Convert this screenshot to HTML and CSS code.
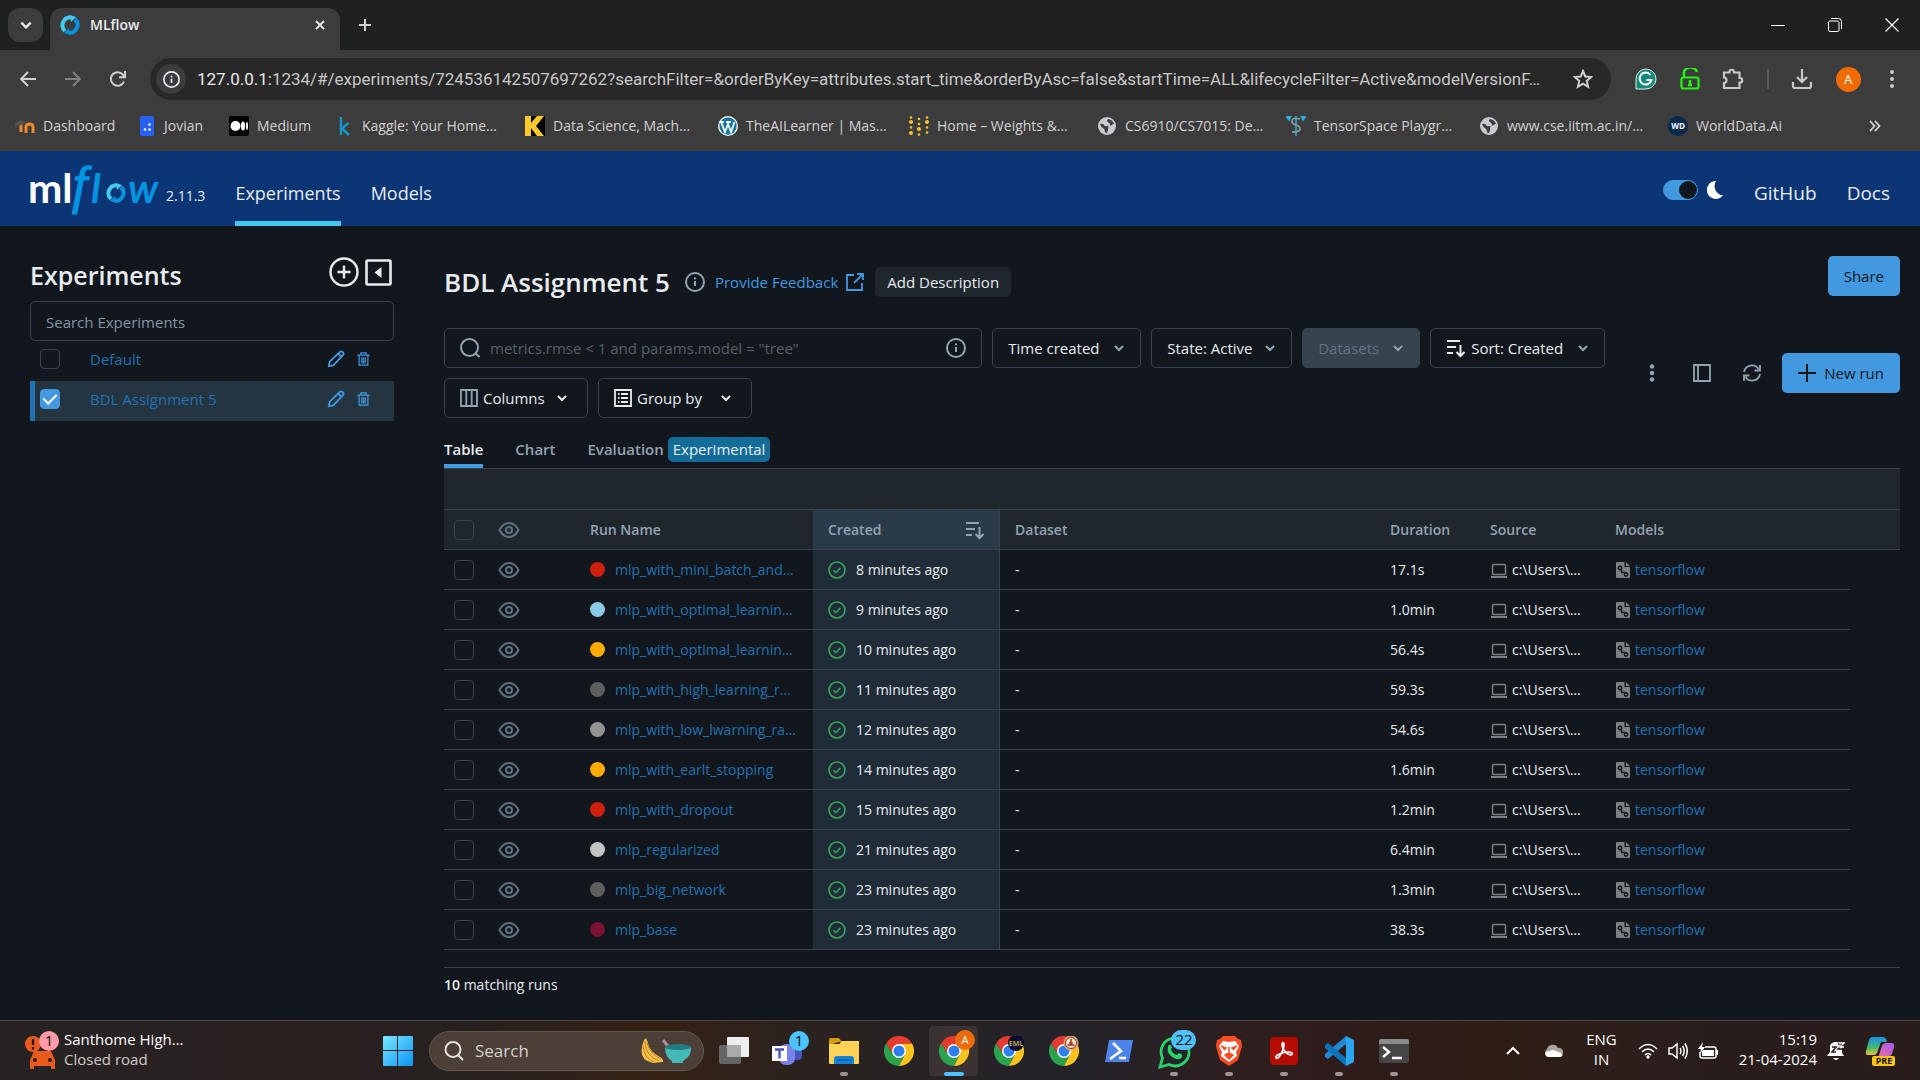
FILE: index.html
```html
<!DOCTYPE html>
<html lang="en">
<head>
<meta charset="utf-8">
<title>MLflow</title>
<link rel="stylesheet" href="styles.css">
</head>
<body>
<svg class="sprite" aria-hidden="true">
  <symbol id="chevron" viewBox="0 0 12 12"><path d="M2 4l4 4 4-4" fill="none" stroke="currentColor" stroke-width="2"/></symbol>
  <symbol id="info" viewBox="0 0 20 20"><g fill="none" stroke="currentColor" stroke-width="2"><circle cx="10" cy="10" r="9"/><path d="M10 9v5"/></g><circle cx="10" cy="6.400" r="1.100" fill="currentColor"/></symbol>
  <symbol id="sort" viewBox="0 0 20 20"><path d="M1 3h13M1 9h9M1 15h6M14.500 7v11M10.500 14l4 4 4-4" fill="none" stroke="currentColor" stroke-width="2"/></symbol>
  <symbol id="eye" viewBox="0 0 22 18"><g fill="none" stroke="currentColor" stroke-width="2"><path d="M1.500 9C4 4 7.500 2 11 2s7 2 9.500 7c-2.500 5-6 7-9.500 7S4 14 1.500 9z"/><circle cx="11" cy="9" r="3"/></g></symbol>
  <symbol id="ok" viewBox="0 0 18 18"><g fill="none" stroke="currentColor" stroke-width="1.600"><circle cx="9" cy="9" r="8"/><path d="M5.500 9.200l2.500 2.500 4.500-5"/></g></symbol>
  <symbol id="laptop" viewBox="0 0 18 16"><rect x="2.500" y="2.500" width="13" height="10" rx="1" fill="none" stroke="currentColor" stroke-width="1.500"/><path d="M1 15h16" stroke="currentColor" stroke-width="2"/></symbol>
  <symbol id="model" viewBox="0 0 16 18"><path d="M2 1h7.500v5H15v10q0 1-1 1H2q-1 0-1-1V2q0-1 1-1zM11 1l4 4h-4z" fill="currentColor"/><g fill="none" stroke="#11171c" stroke-width="1.500"><circle cx="5" cy="7" r="1.700"/><circle cx="11" cy="13.500" r="1.700"/><path d="M6 8.500l1 3h3"/></g></symbol>
  <symbol id="pencil" viewBox="0 0 20 20"><g fill="none" stroke="currentColor" stroke-width="2"><path d="M2 18l1-5L14.500 2q1.500-1 3 .5t.5 3L7 17z"/><path d="M12.500 4l3.500 3.500"/></g></symbol>
  <symbol id="trash" viewBox="0 0 14 16"><path d="M0 3.500h14M4 3V1h6v2M2 4v11h10V4M5 6v7M7 6v7M9 6v7" fill="none" stroke="currentColor" stroke-width="1.400"/></symbol>
  <symbol id="globe" viewBox="0 0 20 20"><circle cx="10" cy="10" r="9" fill="#c7cacf"/><path d="M3 8q3-1 4 1t3 1 1 4-3 2q0-3-2-4t-3-4zM11 3q-2 2 0 3t2 3 3-1l1 0q-1-4-6-5z" fill="#3c3c3c"/></symbol>
  <symbol id="chrome" viewBox="0 0 24 24"><path d="M1.600 6A12 12 0 0 1 22.400 6L12 6.500 7.200 14.800z" fill="#e33b2e"/><path d="M1.600 6A12 12 0 0 0 12 24l4.800-9.200H7.200z" fill="#2ba24c"/><path d="M22.400 6A12 12 0 0 1 12 24l4.800-9.200L12 6.500z" fill="#fcc31e"/><circle cx="12" cy="12" r="5.600" fill="#fff"/><circle cx="12" cy="12" r="4.400" fill="#2d7ff0"/></symbol>
  <symbol id="loop" viewBox="0 0 20 20"><g fill="none" stroke-width="4"><path d="M5 16A8 8 0 0 1 11 2.200" stroke="#43c9ed"/><path d="M15 4A8 8 0 0 1 9 17.800" stroke="#0194e2"/></g><path d="M10 0l6 2-5 5z" fill="#43c9ed"/><path d="M10 20l-6-2 5-5z" fill="#0194e2"/></symbol>
</svg>

<div class="tabstrip">
  <button class="tab-search" aria-label="Search tabs"><svg width="14" height="14"><use href="#chevron"/></svg></button>
  <div class="tab">
    <svg width="20" height="20"><use href="#loop"/></svg>
    <span class="tab-title">MLflow</span>
    <button class="plain" aria-label="Close tab"><svg width="10" height="10" viewBox="0 0 10 10"><path d="M1 1l8 8M9 1L1 9" stroke="#e3e3e3" stroke-width="2"/></svg></button>
  </div>
  <button class="plain new-tab" aria-label="New tab"><svg width="14" height="14" viewBox="0 0 14 14"><path d="M7 1v12M1 7h12" stroke="#d5d5d5" stroke-width="2"/></svg></button>
  <div class="window-buttons">
    <button class="plain" aria-label="Minimize"><svg width="14" height="14" viewBox="0 0 14 14"><path d="M0 7.500h14" stroke="#fff"/></svg></button>
    <button class="plain" aria-label="Restore"><svg width="14" height="14" viewBox="0 0 14 14" fill="none" stroke="#fff"><rect x=".5" y="3" width="10.500" height="10.500" rx="1.500"/><path d="M3 .5h7.500q3 0 3 3V11"/></svg></button>
    <button class="plain" aria-label="Close"><svg width="14" height="14" viewBox="0 0 14 14"><path d="M.5 .5l13 13M13.500.5l-13 13" stroke="#fff" stroke-width="1.200"/></svg></button>
  </div>
</div>

<div class="toolbar">
  <button class="plain" aria-label="Back"><svg width="16" height="16" viewBox="0 0 16 16"><path d="M16 8H1.500M8 1L1.200 8 8 15" fill="none" stroke="#d0d0d0" stroke-width="2"/></svg></button>
  <button class="plain" aria-label="Forward"><svg width="16" height="16" viewBox="0 0 16 16"><path d="M0 8h14.500M8 1l6.800 7L8 15" fill="none" stroke="#808080" stroke-width="2"/></svg></button>
  <button class="plain" aria-label="Reload"><svg width="16" height="16" viewBox="0 0 16 16"><path d="M14 10.500A6.800 6.800 0 1 1 13.200 4L15 6M15 0v6.200H9" fill="none" stroke="#d0d0d0" stroke-width="2"/></svg></button>
  <div class="address">
    <span class="site-info"><svg width="17" height="17"><use href="#info"/></svg></span>
    <div class="url"><span class="host">127.0.0.1:</span>1234/#/experiments/724536142507697262?searchFilter=&amp;orderByKey=attributes.start_time&amp;orderByAsc=false&amp;startTime=ALL&amp;lifecycleFilter=Active&amp;modelVersionF…</div>
    <svg width="20" height="20" viewBox="0 0 20 20"><path d="M10 2l2.300 5.500 6 .5-4.600 3.900 1.400 5.900-5.100-3.200-5.100 3.200 1.400-5.900L1.700 8l6-.5z" fill="none" stroke="#cfcfcf" stroke-width="2"/></svg>
  </div>
  <div class="extensions">
    <svg width="22" height="22" viewBox="0 0 22 22"><path d="M1 21V11A10 10 0 1 1 11 21z" fill="#118a78" stroke="#d9f0ec"/><path d="M15.500 7A6 6 0 1 0 16.500 12H11.500" fill="none" stroke="#fff" stroke-width="2"/></svg>
    <svg width="20" height="22" viewBox="0 0 20 22"><rect x="1.500" y="9.500" width="17" height="11" rx="2" fill="none" stroke="#22f312" stroke-width="2.200"/><path d="M4 9V6a6 5 0 0 1 13-2M10 12v6M8 17h4" fill="none" stroke="#22f312" stroke-width="2.500"/></svg>
    <svg width="22" height="22" viewBox="0 0 22 22"><path d="M2 4.500h5.500V4a2.200 2.200 0 0 1 4.500 0v.5h5.500V10H18a2.200 2.200 0 0 1 0 4.500h-.500V20H2v-5q2.500 0 2.500-2.700T2 9.500z" fill="none" stroke="#c8c8c8" stroke-width="2.200"/></svg>
    <span class="bar"></span>
    <svg width="22" height="22" viewBox="0 0 22 22"><path d="M11 1v12M6 9l5 5 5-5M2 14v4q0 2 2 2h14q2 0 2-2v-4" fill="none" stroke="#c8c8c8" stroke-width="2.200"/></svg>
    <span class="avatar">A</span>
    <svg class="menu" width="6" height="20" viewBox="0 0 6 20" fill="#c8c8c8"><circle cx="3" cy="3" r="2"/><circle cx="3" cy="10" r="2"/><circle cx="3" cy="17" r="2"/></svg>
  </div>
</div>

<nav class="bookmarks" aria-label="Bookmarks">
  <a href="#"><svg width="20" height="20" viewBox="0 0 20 20"><path d="M6 16V8M11 17v-6q0-3 3.500-3t3.500 3v6" stroke="#f08a2c" stroke-width="3" fill="none"/><path d="M0 8l5-3 5 1-4 3zM1 8v5" fill="#555" stroke="#555"/></svg>Dashboard</a>
  <a href="#"><svg width="18" height="20" viewBox="0 0 18 20"><rect x="2" width="14" height="20" rx="2" fill="#285ff5"/><g fill="#fff"><circle cx="7" cy="13.500" r="1.300"/><circle cx="11.500" cy="13.500" r="1.300"/><circle cx="11.500" cy="8.500" r="1.300"/></g></svg>Jovian</a>
  <a href="#"><svg width="20" height="20" viewBox="0 0 20 20"><rect width="20" height="20" rx="2"/><g fill="#fff"><circle cx="6.500" cy="10" r="5"/><ellipse cx="14" cy="10" rx="2" ry="4.500"/><ellipse cx="18" cy="10" rx="1" ry="4"/></g></svg>Medium</a>
  <a href="#"><svg width="17" height="20" viewBox="0 0 17 20"><path d="M4 1v18M11.500 7L5 12.500l7 6.500" stroke="#1597c8" stroke-width="2.400" fill="none"/></svg>Kaggle: Your Home…</a>
  <a href="#"><svg width="20" height="20" viewBox="0 0 20 20"><rect width="20" height="20"/><path d="M0 0h6v7l6-7h7l-8 10 8 10h-7l-6-8v8H0z" fill="#fdc92d"/></svg>Data Science, Mach…</a>
  <a href="#"><svg width="20" height="20" viewBox="0 0 20 20"><circle cx="10" cy="10" r="10" fill="#fff"/><circle cx="10" cy="10" r="8.700" fill="#1576a5"/><path d="M3 6l4 10 3-8 3 8 3.500-10M2 6h4M8 6h5" fill="none" stroke="#fff" stroke-width="1.800"/></svg>TheAILearner | Mas…</a>
  <a href="#"><svg width="20" height="20" viewBox="0 0 20 20" fill="#fcc42b"><circle cx="2" cy="1.500" r="1.300"/><circle cx="2" cy="6" r="2"/><circle cx="2" cy="11.500" r="1.300"/><circle cx="2" cy="17" r="2"/><circle cx="10" cy="3" r="1.300"/><circle cx="10" cy="8" r="1.300"/><circle cx="10" cy="13" r="2"/><circle cx="10" cy="18.500" r="1.300"/><circle cx="18" cy="1.500" r="1.300"/><circle cx="18" cy="6" r="2"/><circle cx="18" cy="11.500" r="1.300"/><circle cx="18" cy="16.500" r="1.300"/></svg>Home – Weights &amp;…</a>
  <a href="#"><svg width="20" height="20"><use href="#globe"/></svg>CS6910/CS7015: De…</a>
  <a href="#"><svg width="20" height="20" viewBox="0 0 20 20"><path d="M0 0h5L3 4zM20 0h-5l2 4zM10 0v20" fill="#26b3e6" stroke="#26b3e6" stroke-width="1.500"/><path d="M14 3q-8-2-8 2 0 3 4 4t4 4-8 3" fill="none" stroke="#8e979b" stroke-width="1.800"/></svg>TensorSpace Playgr…</a>
  <a href="#"><svg width="20" height="20"><use href="#globe"/></svg>www.cse.iitm.ac.in/…</a>
  <a href="#"><svg width="20" height="20" viewBox="0 0 20 20"><circle cx="10" cy="10" r="10" fill="#082a4c"/><text x="10" y="13" text-anchor="middle" class="wd">WD</text></svg>WorldData.Ai</a>
  <button class="plain more" aria-label="More bookmarks"><svg width="12" height="12" viewBox="0 0 12 12"><path d="M1 1l4.500 5L1 11M6 1l4.500 5L6 11" fill="none" stroke="#d5d5d5" stroke-width="1.800"/></svg></button>
</nav>

<header class="app-header">
  <svg class="logo" width="134" height="54" viewBox="0 0 134 54" role="img" aria-label="mlflow">
    <text x="-2" y="41" class="logo-ml">ml</text>
    <text x="35" y="41" class="logo-f">ƒ</text>
    <text x="61" y="41" class="logo-l">l</text>
    <svg x="76" y="21" width="20" height="20"><use href="#loop"/></svg>
    <text x="98" y="41" class="logo-w">w</text>
  </svg>
  <span class="version">2.11.3</span>
  <nav class="app-nav">
    <a href="#" class="current">Experiments</a>
    <a href="#">Models</a>
  </nav>
  <div class="header-right">
    <input type="checkbox" class="switch" aria-label="Dark theme" checked>
    <svg width="17" height="20" viewBox="0 0 17 20"><path d="M9 1A9 9 0 1 0 16 15.500 9.500 9.500 0 0 1 9 1z" fill="#fff"/></svg>
    <a href="#">GitHub</a>
    <a href="#">Docs</a>
  </div>
</header>

<div class="page">
  <aside class="sidebar">
    <div class="side-head">
      <h2>Experiments</h2>
      <button class="plain" aria-label="Create experiment"><svg width="30" height="30" viewBox="0 0 30 30"><g fill="none" stroke="#e8ecf0" stroke-width="2.400"><circle cx="15" cy="15" r="13.500"/><path d="M15 8.500v13M8.500 15h13"/></g></svg></button>
      <button class="plain" aria-label="Hide experiments"><svg width="27" height="27" viewBox="0 0 27 27"><rect x="1.500" y="1.500" width="24" height="24" rx="1" fill="none" stroke="#e8ecf0" stroke-width="2.600"/><path d="M16.500 8v11L9.500 13.500z" fill="#e8ecf0"/></svg></button>
    </div>
    <input class="side-search" type="text" placeholder="Search Experiments" aria-label="Search Experiments">
    <div class="experiment">
      <input type="checkbox" class="box" aria-label="Select Default">
      <a href="#">Default</a>
      <button class="plain" aria-label="Rename Default"><svg width="18" height="18"><use href="#pencil"/></svg></button>
      <button class="plain" aria-label="Delete Default"><svg width="13" height="14"><use href="#trash"/></svg></button>
    </div>
    <div class="experiment selected">
      <input type="checkbox" class="box" aria-label="Select BDL Assignment 5" checked>
      <a href="#">BDL Assignment 5</a>
      <button class="plain" aria-label="Rename BDL Assignment 5"><svg width="18" height="18"><use href="#pencil"/></svg></button>
      <button class="plain" aria-label="Delete BDL Assignment 5"><svg width="13" height="14"><use href="#trash"/></svg></button>
    </div>
  </aside>

  <main class="main">
    <div class="title-row">
      <h1>BDL Assignment 5</h1>
      <svg class="muted" width="20" height="20"><use href="#info"/></svg>
      <a href="#" class="feedback">Provide Feedback <svg width="18" height="18" viewBox="0 0 18 18"><path d="M8 2H1v15h15v-7M8 10L16.500 1.500M11 1h6v6" fill="none" stroke="currentColor" stroke-width="1.800"/></svg></a>
      <button class="describe">Add Description</button>
      <button class="primary share">Share</button>
    </div>

    <div class="controls">
      <div class="filters">
        <div class="search">
          <svg class="muted" width="20" height="20" viewBox="0 0 20 20"><g fill="none" stroke="currentColor" stroke-width="2"><circle cx="9.500" cy="9.500" r="8.500"/><path d="M15.500 15.500l4 3.500"/></g></svg>
          <input type="text" placeholder='metrics.rmse &lt; 1 and params.model = "tree"' aria-label="Search runs">
          <svg class="muted" width="20" height="20"><use href="#info"/></svg>
        </div>
        <div class="picker time"><select aria-label="Time created"><option>Time created</option></select><svg width="12" height="12"><use href="#chevron"/></svg></div>
        <div class="picker state"><select aria-label="State"><option>State: Active</option></select><svg width="12" height="12"><use href="#chevron"/></svg></div>
        <div class="picker datasets"><select aria-label="Datasets" disabled><option>Datasets</option></select><svg width="12" height="12"><use href="#chevron"/></svg></div>
        <div class="picker order"><svg width="20" height="20"><use href="#sort"/></svg><select aria-label="Sort"><option>Sort: Created</option></select><svg width="12" height="12"><use href="#chevron"/></svg></div>
        <button class="picker columns"><svg class="muted" width="18" height="18" viewBox="0 0 18 18"><path d="M1 1h16v16H1zM6.300 1v16M11.700 1v16" fill="none" stroke="currentColor" stroke-width="1.800"/></svg>Columns<svg width="12" height="12"><use href="#chevron"/></svg></button>
        <button class="picker group"><svg width="18" height="18" viewBox="0 0 18 18"><path d="M1 1h16v16H1zM4 5h1.500M7 5h7M4 9h1.500M7 9h7M4 13h1.500M7 13h7" fill="none" stroke="currentColor" stroke-width="1.800"/></svg>Group by<svg width="12" height="12"><use href="#chevron"/></svg></button>
      </div>
      <div class="actions">
        <button class="plain" aria-label="More"><svg width="6" height="18" viewBox="0 0 6 18" fill="#92a4b3"><circle cx="3" cy="2.500" r="2.200"/><circle cx="3" cy="9" r="2.200"/><circle cx="3" cy="15.500" r="2.200"/></svg></button>
        <button class="plain" aria-label="Toggle side panel"><svg width="18" height="18" viewBox="0 0 18 18"><path d="M1 1h16v16H1zM5 1v16" fill="none" stroke="#92a4b3" stroke-width="1.800"/></svg></button>
        <button class="plain" aria-label="Refresh"><svg width="18" height="18" viewBox="0 0 18 18"><path d="M1 8A8 8 0 0 1 15.500 5M17 1v5.500h-5.500M17 10A8 8 0 0 1 2.500 13M1 17v-5.500h5.500" fill="none" stroke="#92a4b3" stroke-width="1.800"/></svg></button>
        <button class="primary new-run"><svg width="18" height="18" viewBox="0 0 18 18"><path d="M9 0v18M0 9h18" stroke="#11171c" stroke-width="2"/></svg>New run</button>
      </div>
    </div>

    <nav class="views">
      <a href="#" class="current">Table</a>
      <a href="#">Chart</a>
      <a href="#">Evaluation <span class="tag">Experimental</span></a>
    </nav>

    <div class="band"></div>
    <table class="runs">
      <colgroup><col class="c-check"><col class="c-eye"><col class="c-name"><col class="c-created"><col><col class="c-duration"><col class="c-source"><col class="c-models"><col class="c-end"></colgroup>
      <thead><tr>
        <th><input type="checkbox" class="box" aria-label="Select all runs"></th>
        <th><svg class="eye" width="22" height="18"><use href="#eye"/></svg></th>
        <th>Run Name</th>
        <th class="created"><div class="cell spread">Created<svg width="20" height="20"><use href="#sort"/></svg></div></th>
        <th>Dataset</th><th>Duration</th><th>Source</th><th>Models</th><th></th>
      </tr></thead>
      <tbody>
        <tr><td><input type="checkbox" class="box" aria-label="Select run 1"></td><td><svg class="eye" width="22" height="18"><use href="#eye"/></svg></td><td><div class="cell"><span class="dot red"></span><a href="#">mlp_with_mini_batch_and…</a></div></td><td class="created"><div class="cell"><svg class="ok" width="18" height="18"><use href="#ok"/></svg>8 minutes ago</div></td><td>-</td><td>17.1s</td><td><div class="cell file"><svg width="18" height="16"><use href="#laptop"/></svg>c:\Users\…</div></td><td><div class="cell file"><svg width="16" height="18"><use href="#model"/></svg><a href="#">tensorflow</a></div></td><td class="end"></td></tr>
        <tr><td><input type="checkbox" class="box" aria-label="Select run 2"></td><td><svg class="eye" width="22" height="18"><use href="#eye"/></svg></td><td><div class="cell"><span class="dot sky"></span><a href="#">mlp_with_optimal_learnin…</a></div></td><td class="created"><div class="cell"><svg class="ok" width="18" height="18"><use href="#ok"/></svg>9 minutes ago</div></td><td>-</td><td>1.0min</td><td><div class="cell file"><svg width="18" height="16"><use href="#laptop"/></svg>c:\Users\…</div></td><td><div class="cell file"><svg width="16" height="18"><use href="#model"/></svg><a href="#">tensorflow</a></div></td><td class="end"></td></tr>
        <tr><td><input type="checkbox" class="box" aria-label="Select run 3"></td><td><svg class="eye" width="22" height="18"><use href="#eye"/></svg></td><td><div class="cell"><span class="dot amber"></span><a href="#">mlp_with_optimal_learnin…</a></div></td><td class="created"><div class="cell"><svg class="ok" width="18" height="18"><use href="#ok"/></svg>10 minutes ago</div></td><td>-</td><td>56.4s</td><td><div class="cell file"><svg width="18" height="16"><use href="#laptop"/></svg>c:\Users\…</div></td><td><div class="cell file"><svg width="16" height="18"><use href="#model"/></svg><a href="#">tensorflow</a></div></td><td class="end"></td></tr>
        <tr><td><input type="checkbox" class="box" aria-label="Select run 4"></td><td><svg class="eye" width="22" height="18"><use href="#eye"/></svg></td><td><div class="cell"><span class="dot dark"></span><a href="#">mlp_with_high_learning_r…</a></div></td><td class="created"><div class="cell"><svg class="ok" width="18" height="18"><use href="#ok"/></svg>11 minutes ago</div></td><td>-</td><td>59.3s</td><td><div class="cell file"><svg width="18" height="16"><use href="#laptop"/></svg>c:\Users\…</div></td><td><div class="cell file"><svg width="16" height="18"><use href="#model"/></svg><a href="#">tensorflow</a></div></td><td class="end"></td></tr>
        <tr><td><input type="checkbox" class="box" aria-label="Select run 5"></td><td><svg class="eye" width="22" height="18"><use href="#eye"/></svg></td><td><div class="cell"><span class="dot gray"></span><a href="#">mlp_with_low_lwarning_ra…</a></div></td><td class="created"><div class="cell"><svg class="ok" width="18" height="18"><use href="#ok"/></svg>12 minutes ago</div></td><td>-</td><td>54.6s</td><td><div class="cell file"><svg width="18" height="16"><use href="#laptop"/></svg>c:\Users\…</div></td><td><div class="cell file"><svg width="16" height="18"><use href="#model"/></svg><a href="#">tensorflow</a></div></td><td class="end"></td></tr>
        <tr><td><input type="checkbox" class="box" aria-label="Select run 6"></td><td><svg class="eye" width="22" height="18"><use href="#eye"/></svg></td><td><div class="cell"><span class="dot amber"></span><a href="#">mlp_with_earlt_stopping</a></div></td><td class="created"><div class="cell"><svg class="ok" width="18" height="18"><use href="#ok"/></svg>14 minutes ago</div></td><td>-</td><td>1.6min</td><td><div class="cell file"><svg width="18" height="16"><use href="#laptop"/></svg>c:\Users\…</div></td><td><div class="cell file"><svg width="16" height="18"><use href="#model"/></svg><a href="#">tensorflow</a></div></td><td class="end"></td></tr>
        <tr><td><input type="checkbox" class="box" aria-label="Select run 7"></td><td><svg class="eye" width="22" height="18"><use href="#eye"/></svg></td><td><div class="cell"><span class="dot red"></span><a href="#">mlp_with_dropout</a></div></td><td class="created"><div class="cell"><svg class="ok" width="18" height="18"><use href="#ok"/></svg>15 minutes ago</div></td><td>-</td><td>1.2min</td><td><div class="cell file"><svg width="18" height="16"><use href="#laptop"/></svg>c:\Users\…</div></td><td><div class="cell file"><svg width="16" height="18"><use href="#model"/></svg><a href="#">tensorflow</a></div></td><td class="end"></td></tr>
        <tr><td><input type="checkbox" class="box" aria-label="Select run 8"></td><td><svg class="eye" width="22" height="18"><use href="#eye"/></svg></td><td><div class="cell"><span class="dot light-gray"></span><a href="#">mlp_regularized</a></div></td><td class="created"><div class="cell"><svg class="ok" width="18" height="18"><use href="#ok"/></svg>21 minutes ago</div></td><td>-</td><td>6.4min</td><td><div class="cell file"><svg width="18" height="16"><use href="#laptop"/></svg>c:\Users\…</div></td><td><div class="cell file"><svg width="16" height="18"><use href="#model"/></svg><a href="#">tensorflow</a></div></td><td class="end"></td></tr>
        <tr><td><input type="checkbox" class="box" aria-label="Select run 9"></td><td><svg class="eye" width="22" height="18"><use href="#eye"/></svg></td><td><div class="cell"><span class="dot dark"></span><a href="#">mlp_big_network</a></div></td><td class="created"><div class="cell"><svg class="ok" width="18" height="18"><use href="#ok"/></svg>23 minutes ago</div></td><td>-</td><td>1.3min</td><td><div class="cell file"><svg width="18" height="16"><use href="#laptop"/></svg>c:\Users\…</div></td><td><div class="cell file"><svg width="16" height="18"><use href="#model"/></svg><a href="#">tensorflow</a></div></td><td class="end"></td></tr>
        <tr><td><input type="checkbox" class="box" aria-label="Select run 10"></td><td><svg class="eye" width="22" height="18"><use href="#eye"/></svg></td><td><div class="cell"><span class="dot wine"></span><a href="#">mlp_base</a></div></td><td class="created"><div class="cell"><svg class="ok" width="18" height="18"><use href="#ok"/></svg>23 minutes ago</div></td><td>-</td><td>38.3s</td><td><div class="cell file"><svg width="18" height="16"><use href="#laptop"/></svg>c:\Users\…</div></td><td><div class="cell file"><svg width="16" height="18"><use href="#model"/></svg><a href="#">tensorflow</a></div></td><td class="end"></td></tr>
      </tbody>
    </table>
    <p class="count"><strong>10</strong> matching runs</p>
  </main>
</div>

<footer class="taskbar">
  <div class="widget">
    <svg width="36" height="40" viewBox="0 0 36 40"><circle cx="8" cy="13" r="8" fill="#ea5a1c"/><path d="M8 8v6M8 16v2.500" stroke="#1c1c1c" stroke-width="2.400"/><path d="M9 20h17l3 7 1 2v9h-4v-3H9v3H5v-9l1-2z" fill="#ea5a1c"/><circle cx="10" cy="29" r="2" fill="#26211f"/><circle cx="25" cy="29" r="2" fill="#26211f"/><circle cx="24" cy="10" r="10" fill="#ff9aa8"/><text x="24" y="15" text-anchor="middle" class="badge-text">1</text></svg>
    <div class="two-lines">Santhome High…<br><span class="dim">Closed road</span></div>
  </div>
  <div class="dock">
    <button class="app" aria-label="Start"><svg width="30" height="30" viewBox="0 0 30 30"><defs><linearGradient id="win" x1="0" y1="0" x2="1" y2="1"><stop offset="0" stop-color="#79e9ff"/><stop offset="1" stop-color="#0a93f5"/></linearGradient></defs><path d="M0 1q0-1 1-1h13v14H0zM15 0h14q1 0 1 1v13H15zM0 15h14v15H1q-1 0-1-1zM15 15h15v14q0 1-1 1H15z" fill="url(#win)"/></svg></button>
    <label class="task-search">
      <svg width="20" height="20" viewBox="0 0 20 20"><g fill="none" stroke="#e6e3e1" stroke-width="2"><circle cx="9" cy="8.500" r="7.500"/><path d="M14 14l5 5"/></g></svg>
      <input type="text" placeholder="Search">
      <svg width="54" height="28" viewBox="0 0 54 28"><path d="M6 3q-8 20 9 23l10-1q1-3-3-5Q11 14 10 6L8 1z" fill="#f3c04b"/><path d="M7 4q0 15 14 20M9 6q2 10 14 16M5 9q1 12 11 16" fill="none" stroke="#c98524"/><path d="M25 3l8 10" stroke="#a98f9d" stroke-width="3"/><path d="M27 10h26q1 9-8 14v2H34v-2q-7-4-7-14z" fill="#46b9b9"/><ellipse cx="40" cy="10" rx="13" ry="3" fill="#237a83"/></svg>
    </label>
    <button class="app" aria-label="Task view"><svg width="32" height="32" viewBox="0 0 32 32"><rect x="1" y="10" width="22" height="19" rx="2" fill="#666"/><rect x="9" y="2" width="22" height="20" rx="1" fill="#eee"/><path d="M9 10h14v12H9z" fill="#aaa"/></svg></button>
    <button class="app" aria-label="Teams"><svg width="40" height="40" viewBox="0 0 40 40"><rect x="20" y="14" width="13" height="15" rx="4" fill="#4b53bc"/><rect x="10" y="13" width="16" height="21" rx="7" fill="#7b83eb"/><rect x="3" y="15" width="15" height="15" fill="#fff"/><path d="M6 18.500h9M10.500 18v9.500" stroke="#4b53bc" stroke-width="2.400"/><circle cx="30" cy="10" r="10" fill="#4cc2ff"/><text x="30" y="15" text-anchor="middle" class="badge-text">1</text></svg></button>
    <button class="app open" aria-label="File Explorer"><svg width="30" height="28" viewBox="0 0 30 28"><path d="M0 3q0-2 2-2h8l3 4h-3L0 8z" fill="#d99b08"/><path d="M0 7h10l3-3h17v22q0 1-1 1H1q-1 0-1-1z" fill="#ffd355"/><path d="M5 27v-5q0-3 3-3h14q3 0 3 3v5z" fill="#1583d5"/><path d="M8 23h14" stroke="#0d4d91"/></svg></button>
    <button class="app" aria-label="Chrome"><svg width="30" height="30"><use href="#chrome"/></svg></button>
    <button class="app active" aria-label="Chrome, profile A"><svg width="42" height="42" viewBox="0 0 42 42"><svg x="6" y="6" width="30" height="30"><use href="#chrome"/></svg><circle cx="32" cy="10" r="10" fill="#ec6b0b"/><text x="32" y="14" text-anchor="middle" class="mini">A</text></svg></button>
    <button class="app" aria-label="Chrome, profile EML"><svg width="30" height="30" viewBox="0 0 30 30"><svg width="30" height="30"><use href="#chrome"/></svg><circle cx="22" cy="7" r="8" fill="#0b0a32"/><text x="22" y="10" text-anchor="middle" class="eml">EML</text></svg></button>
    <button class="app" aria-label="Chrome, institute profile"><svg width="30" height="30" viewBox="0 0 30 30"><svg width="30" height="30"><use href="#chrome"/></svg><circle cx="22" cy="7" r="7.500" fill="#dca470"/><circle cx="22" cy="7" r="5.500" fill="#f6e2ca" stroke="#8f3b22"/><path d="M18.500 9h7M22 3v6M20 7h4" stroke="#8f3b22" stroke-width="1.500"/></svg></button>
    <button class="app" aria-label="PowerShell"><svg width="30" height="24" viewBox="0 0 30 24"><path d="M5 1h24l-4 22H1z" fill="#4b83e8"/><path d="M9 4l8 8-11 8M15 19h7" fill="none" stroke="#fff" stroke-width="2.600"/></svg></button>
    <button class="app open" aria-label="WhatsApp"><svg width="46" height="42" viewBox="0 0 46 42"><path d="M9 37l2.500-9A14 14 0 1 1 18 34.500z" fill="#232328" stroke="#2bd468" stroke-width="2.800"/><path d="M17 16q2-3 4 1l-1 3q2 4 6 5l2-2q4 1 3 4-2 4-8 1-8-4-6-12z" fill="#2bd468"/><rect x="20" y="0" width="25" height="20" rx="10" fill="#4cc2ff"/><text x="33" y="15" text-anchor="middle" class="badge-text">22</text></svg></button>
    <button class="app open" aria-label="Brave"><svg width="26" height="30" viewBox="0 0 26 30"><path d="M7 0h12l3 3 3 1 1 6-4 14-9 6-9-6L0 10l1-6 3-1z" fill="#fb4b22"/><path d="M7 5l6 1 6-1 4 5-3 6 1 4-8 6-8-6 1-4-3-6z" fill="#fff"/><path d="M5 10l5 2-2 2M21 10l-5 2 2 2M13 11v7M9 19l4-2 4 2-4 4z" fill="#fb4b22" stroke="#fb4b22" stroke-width="1.500"/></svg></button>
    <button class="app open" aria-label="Acrobat"><svg width="28" height="28" viewBox="0 0 28 28"><rect width="28" height="28" rx="4" fill="#b30b00"/><path d="M6 21q-1-3 6-5 8-2 10 0 1 3-4 1-6-4-6-10 1-3 2 0 0 6-5 13-2 2-3 1z" fill="none" stroke="#fff" stroke-width="1.700"/></svg></button>
    <button class="app open" aria-label="VS Code"><svg width="30" height="30" viewBox="0 0 30 30"><path d="M22 0v30l8-4V4z" fill="#2ba5ef"/><path d="M22 0v8L4 23l-3-2v-3z" fill="#1f8ad2"/><path d="M22 30v-8L4 7 1 9v3z" fill="#0b72bb"/></svg></button>
    <button class="app open" aria-label="Terminal"><svg width="30" height="24" viewBox="0 0 30 24"><rect width="30" height="24" rx="2" fill="#464646"/><path d="M0 5V2q0-2 2-2h26q2 0 2 2v3z" fill="#8b8b8b"/><path d="M4 8l6 5-6 5M13 19h10" fill="none" stroke="#fff" stroke-width="2.400"/></svg></button>
  </div>
  <div class="tray">
    <svg width="14" height="9" viewBox="0 0 14 9"><path d="M1 8l6-6 6 6" fill="none" stroke="#fff" stroke-width="2"/></svg>
    <svg class="cloud" width="20" height="14" viewBox="0 0 20 14"><path d="M4 12a4 4 0 0 1 0-7 6 6 0 0 1 11-1 4 4 0 0 1 2 8z" fill="#aaa5a3"/><path d="M5 13a3 3 0 0 1-2-5l7-2 8 3q3 2 0 4z" fill="#fff"/></svg>
    <div class="lang two-lines">ENG<br>IN</div>
    <svg width="20" height="16" viewBox="0 0 20 16"><g fill="none" stroke="#fff" stroke-width="1.600"><path d="M1 6q9-9 18 0M4 9q6-6 12 0M7 12q3-3 6 0"/></g><circle cx="10" cy="14" r="1.700" fill="#fff"/></svg>
    <svg width="20" height="18" viewBox="0 0 20 18"><path d="M1 6h3l5-4v14l-5-4H1zM12 6q2 3 0 6M14.500 4q3.500 5 0 10M17 1.500q4.500 7.500 0 15" fill="none" stroke="#fff" stroke-width="1.500"/></svg>
    <svg width="20" height="18" viewBox="0 0 20 18"><path d="M7 5h9q2 0 2 2v7q0 2-2 2H4q-2 0-2-2v-4" fill="none" stroke="#fff" stroke-width="1.500"/><path d="M4 8h12v6H4zM18 8h2v5h-2zM5 0L0 7h3l-1 5 5-7H4z" fill="#fff"/></svg>
    <div class="clock two-lines">15:19<br>21-04-2024</div>
    <svg width="18" height="20" viewBox="0 0 18 20"><path d="M3 5q1-4 6-4 5 0 6 4v7l2 3H0l3-4zM6 17h6q-3 4-6 0z" fill="#fff"/><path d="M5 6h4l-4 5h4M11 3h5l-5 5h5" fill="none" stroke="#2b1e1c" stroke-width="1.600"/><path d="M12 2h5l-4 4h4" fill="none" stroke="#fff" stroke-width="1.300"/></svg>
    <svg class="copilot" width="30" height="30" viewBox="0 0 30 30"><defs><linearGradient id="cpa" x1="0" y1="0" x2="0" y2="1"><stop offset="0" stop-color="#1990ec"/><stop offset=".6" stop-color="#46b96c"/><stop offset="1" stop-color="#edc429"/></linearGradient><linearGradient id="cpb" x1="1" y1="0" x2="0" y2="1"><stop offset="0" stop-color="#a058f3"/><stop offset="1" stop-color="#fa7190"/></linearGradient></defs><path d="M8 1h10q3 0 4 5h-6l-4 11q-1 2-3 2H3q-3 0-2-4L4 4q1-3 4-3z" fill="url(#cpa)"/><path d="M21 7h5q4 0 3 4l-2 7-4 5H9q3 0 5-4l3-9q1-3 4-3z" fill="url(#cpb)"/><rect x="7" y="20" width="23" height="10" rx="2" fill="#fdc315"/><text x="19" y="28" text-anchor="middle" class="pre">PRE</text></svg>
  </div>
</footer>
</body>
</html>
```
FILE: styles.css
```css
* { box-sizing: border-box; }

body {
  margin: 0;
  min-height: 100vh;
  display: flex;
  flex-direction: column;
  background: #11171c;
  color: #e8ecf0;
  font: 15px/20px "Open Sans", "Noto Sans", sans-serif;
}

svg { display: block; flex: none; }
.sprite { position: absolute; width: 0; height: 0; }
a { color: inherit; text-decoration: none; }
button, input, select { font: inherit; color: inherit; margin: 0; }
button { cursor: pointer; }

.plain {
  display: flex;
  align-items: center;
  justify-content: center;
  padding: 0;
  border: 0;
  background: none;
}

/* browser frame */
.tabstrip {
  display: flex;
  align-items: stretch;
  height: 50px;
  padding: 8px 0 0 8px;
  background: #1f2120;
}
.tab-search {
  display: flex;
  align-items: center;
  justify-content: center;
  width: 35px;
  height: 34px;
  padding: 0;
  border: 0;
  border-radius: 12px;
  background: #3c3c3c;
}
.tab {
  display: flex;
  align-items: center;
  gap: 10px;
  width: 290px;
  margin-left: 7px;
  padding: 0 15px 8px 10px;
  border-radius: 12px 12px 0 0;
  background: #3c3c3c;
}
.tab-title { flex: 1; font-size: 14px; font-weight: 600; }
.new-tab { width: 50px; height: 34px; }
.window-buttons { display: flex; margin-left: auto; }
.window-buttons .plain { width: 57px; height: 34px; }

.toolbar {
  display: flex;
  align-items: center;
  height: 58px;
  padding-left: 5px;
  background: #3c3c3c;
}
.toolbar > .plain { width: 45px; height: 40px; }
.address {
  display: flex;
  align-items: center;
  flex: 1;
  min-width: 0;
  height: 42px;
  margin-left: 10px;
  padding: 0 18px 0 6px;
  border-radius: 21px;
  background: #282828;
}
.site-info {
  display: flex;
  align-items: center;
  justify-content: center;
  width: 30px;
  height: 30px;
  border-radius: 15px;
  background: #3c3c3c;
}
.url {
  flex: 1;
  min-width: 0;
  margin: 0 8px 0 11px;
  overflow: hidden;
  color: #c7c7c7;
  font-family: Roboto, "Open Sans", sans-serif;
  font-size: 17px;
  line-height: 24px;
  white-space: nowrap;
  text-overflow: ellipsis;
}
.host { color: #e8e8e8; }
.extensions {
  display: flex;
  align-items: center;
  justify-content: space-between;
  width: 309px;
  padding: 0 25px 0 24px;
}
.menu { margin-left: 6px; }
.bar { width: 2px; height: 20px; background: #5c5c5c; }
.avatar {
  width: 25px;
  height: 25px;
  border-radius: 50%;
  background: #f06c00;
  color: #fff;
  font-size: 13px;
  line-height: 25px;
  text-align: center;
}

.bookmarks {
  display: grid;
  grid-template-columns: 123px 91px 108px 188px 193px 191px 188px 189px 193px 189px 150px 1fr;
  align-items: center;
  height: 43px;
  padding: 0 39px 8px 15px;
  background: #3c3c3c;
  color: #d2d2d2;
  font-size: 14px;
  font-weight: 500;
  white-space: nowrap;
}
.bookmarks a { display: flex; align-items: center; gap: 8px; }
.more { justify-self: end; }
.wd { fill: #fff; font-size: 8px; font-weight: 700; }

/* application header */
.app-header {
  display: flex;
  align-items: center;
  height: 75px;
  padding: 0 30px;
  background: #0b3574;
  font-size: 19px;
}
.logo { overflow: visible; }
.logo-ml, .logo-w, .logo-l { font-family: Lato, sans-serif; font-size: 41px; font-weight: 700; }
.logo-ml { fill: #fff; }
.logo-f { fill: #0194e2; stroke: #0194e2; font-family: "Liberation Sans", sans-serif; font-size: 52px; font-style: italic; }
.logo-l, .logo-w { fill: #0194e2; font-style: italic; }
.version { margin: 14px 30px 0 2px; font-size: 14px; }
.app-nav { display: flex; gap: 30px; align-self: stretch; font-size: 18px; }
.app-nav a { padding: 32px 0 18px; border-bottom: 5px solid transparent; }
.app-nav .current { border-bottom-color: #43c9ed; }
.header-right { display: flex; align-items: center; margin-left: auto; }
.header-right svg { margin: 3px 0 0 9px; }
.header-right a { margin: 8px 0 0 30px; }
.switch {
  appearance: none;
  display: flex;
  justify-content: flex-end;
  width: 35px;
  height: 20px;
  margin-top: 3px;
  border: 1px solid #4299e0;
  border-radius: 10px;
  background: #4299e0;
}
.switch::after { content: ""; width: 18px; height: 18px; border-radius: 50%; background: #11171c; }

/* page body */
.page { display: flex; flex: 1; padding: 30px 20px 0 30px; gap: 50px; }

.sidebar { width: 364px; }
.side-head { display: flex; align-items: center; gap: 6px; height: 32px; margin-bottom: 13px; padding-right: 2px; }
.side-head h2 { flex: 1; margin: 6px 0 0; font-size: 25px; line-height: 32px; font-weight: 600; }
.side-search {
  display: block;
  width: 100%;
  height: 40px;
  padding: 2px 15px 0;
  border: 1px solid #37444f;
  border-radius: 5px;
  background: none;
}
.side-search::placeholder { color: #8396a5; opacity: 1; }
.experiment {
  display: flex;
  align-items: center;
  height: 40px;
  padding: 0 24px 4px 5px;
  border-left: 5px solid transparent;
  color: #4299e0;
}
.experiment a { flex: 1; margin-left: 30px; color: #2272b4; }
.experiment .plain + .plain { margin-left: 12px; }
.selected { border-left-color: #2272b4; background: #243441; }

.box {
  appearance: none;
  display: flex;
  align-items: center;
  justify-content: center;
  width: 20px;
  height: 20px;
  border: 1px solid #37444f;
  border-radius: 4px;
}
.box:checked { border-color: #4299e0; background: #4299e0; }
.box:checked::after {
  content: "";
  width: 6px;
  height: 11px;
  margin-bottom: 3px;
  border: solid #fff;
  border-width: 0 2px 2px 0;
  transform: rotate(45deg);
}

.main { flex: 1; min-width: 0; }
.muted { color: #92a4b3; }

.title-row { display: flex; align-items: center; height: 51px; }
.title-row h1 { margin: 0 15px 0 0; font-size: 26px; line-height: 36px; font-weight: 600; }
.feedback { display: flex; align-items: center; gap: 8px; margin-left: 10px; color: #4299e0; }
.describe {
  height: 30px;
  margin-left: 11px;
  padding: 0 12px;
  border: 0;
  border-radius: 5px;
  background: #1f272d;
}
.primary {
  height: 40px;
  padding: 0 16px;
  border: 0;
  border-radius: 5px;
  background: #4299e0;
  color: #11171c;
}
.share { align-self: flex-start; margin-left: auto; }

.controls { display: flex; align-items: center; gap: 22px; margin-top: 21px; }
.filters { display: flex; flex: 1; flex-wrap: wrap; gap: 10px; }
.search, .picker {
  display: flex;
  align-items: center;
  height: 40px;
  padding: 0 15px;
  border: 1px solid #37444f;
  border-radius: 5px;
  background: none;
}
.search { flex: 1 1 500px; gap: 10px; }
.search input { flex: 1; min-width: 0; padding: 0; border: 0; background: none; outline: 0; }
.search input::placeholder { color: #5a5f64; opacity: 1; }
.picker { gap: 5px; color: #e8ecf0; }
.picker select { appearance: none; padding: 0; border: 0; background: none; opacity: 1; }
.picker svg:last-child { margin-left: auto; }
.picker select + svg { color: #92a4b3; }
.time { width: 149px; }
.state { width: 141px; }
.datasets { width: 118px; background: #37444f; color: #5f7281; }
.order { width: 175px; }
.columns { width: 144px; padding-right: 19px; }
.group { width: 154px; padding-right: 19px; }

.actions { display: flex; align-items: center; }
.actions .plain { width: 50px; height: 40px; }
.new-run { display: flex; align-items: center; gap: 8px; margin-left: 5px; }

.views { display: flex; gap: 32px; margin-top: 14px; color: #92a4b3; font-weight: 600; }
.views a { padding: 7px 0 5px; border-bottom: 4px solid transparent; line-height: 20px; }
.views .current { border-bottom-color: #4299e0; color: #e8ecf0; }
.tag {
  display: inline-block;
  height: 25px;
  margin: -5px 0 -3px;
  padding: 2px 5px;
  border-radius: 5px;
  background: #136c98;
  color: #e8ecf0;
  font-weight: 500;
}

.band { height: 41px; border-top: 1px solid #37444f; background: #1f272d; }
.runs { width: 100%; table-layout: fixed; border-collapse: separate; border-spacing: 0; font-size: 14px; }
.c-check { width: 50px; }
.c-eye { width: 80px; }
.c-name { width: 239px; }
.c-created { width: 187px; }
.c-duration { width: 100px; }
.c-source { width: 125px; }
.c-models { width: 250px; }
.c-end { width: 50px; }
.runs th, .runs td { height: 40px; padding: 0 0 0 15px; border-bottom: 1px solid #37444f; text-align: left; white-space: nowrap; }
.runs th { height: 41px; border-top: 1px solid #37444f; background: #1f272d; color: #92a4b3; font-weight: 600; }
.runs th:first-child, .runs td:first-child { padding-left: 10px; }
.runs th:nth-child(2), .runs td:nth-child(2) { padding-left: 4px; }
.runs th:nth-child(3), .runs td:nth-child(3) { padding-left: 16px; }
.runs .created { border-right: 1px solid #37444f; background: #202c37; }
.runs th.created { background: #2b3a48; }
.runs td.end { border-bottom: 0; }
.runs td a { color: #2272b4; }
.cell { display: flex; align-items: center; gap: 10px; }
.file { gap: 4px; }
.file svg { color: #7c8184; }
.spread { justify-content: space-between; padding-right: 14px; }
.eye { color: #5f7281; }
.ok { color: #3ba65e; }
.dot { flex: none; width: 15px; height: 15px; border-radius: 50%; }
.red { background: #d01f0c; }
.sky { background: #8bcae7; }
.amber { background: #ffab00; }
.dark { background: #5f5f5f; }
.gray { background: #929292; }
.light-gray { background: #c3c3c3; }
.wine { background: #7d1133; }

.count { margin: 17px 0 0; padding: 7px 0; border-top: 1px solid #37444f; font-size: 14px; }
.count strong { font-weight: 600; }

/* desktop taskbar */
.taskbar {
  display: grid;
  grid-template-columns: minmax(180px, 345px) auto 1fr;
  align-items: center;
  height: 60px;
  padding: 0 25px;
  border-top: 1px solid #4a4644;
  background: linear-gradient(90deg, #262322 0%, #2a2020 15%, #272120 24%, #352114 34%, #2a221f 42%, #23232a 56%, #2e1e1e 65%, #2e1c1a 72%, #2f1d15 78%, #2a1e1d 88%, #271d1b 100%);
  color: #fff;
}
.widget { display: flex; gap: 3px; align-items: center; }
.two-lines { padding-bottom: 4px; }
.dim { color: #cfcac7; }
.badge-text { font-size: 15px; fill: #111; }
.dock { display: flex; align-items: center; }
.app {
  position: relative;
  display: flex;
  align-items: center;
  justify-content: center;
  width: 55px;
  height: 50px;
  padding: 0;
  border: 0;
  background: none;
}
.active { border-radius: 6px; background: #3b3333; background-clip: padding-box; border: solid transparent; border-width: 0 3px; }
.open::after, .active::after {
  content: "";
  position: absolute;
  bottom: 0;
  width: 8px;
  height: 4px;
  border-radius: 2px;
  background: #9c9593;
}
.active::after { width: 20px; background: #4cc2ff; }
.task-search {
  display: flex;
  align-items: center;
  gap: 11px;
  width: 275px;
  height: 40px;
  margin: 0 2px 0 4px;
  padding: 0 11px 0 14px;
  border: 1px solid #625850;
  border-radius: 20px;
  background: #4b3f37;
}
.task-search input { flex: 1; min-width: 0; padding: 0; border: 0; background: none; outline: 0; font-size: 17px; }
.task-search input::placeholder { color: #d6d0cc; opacity: 1; }
.mini { fill: #fff; font-size: 11px; }
.eml { fill: #b6a24a; font-size: 7px; font-weight: 700; }
.pre { fill: #111; font-size: 9px; font-weight: 700; }
.tray { display: flex; align-items: center; justify-content: flex-end; gap: 10px; }
.cloud { margin: 0 13px; }
.lang { margin-right: 11px; text-align: center; }
.clock { margin-left: 11px; text-align: right; }
.copilot { margin-left: 10px; }
```
